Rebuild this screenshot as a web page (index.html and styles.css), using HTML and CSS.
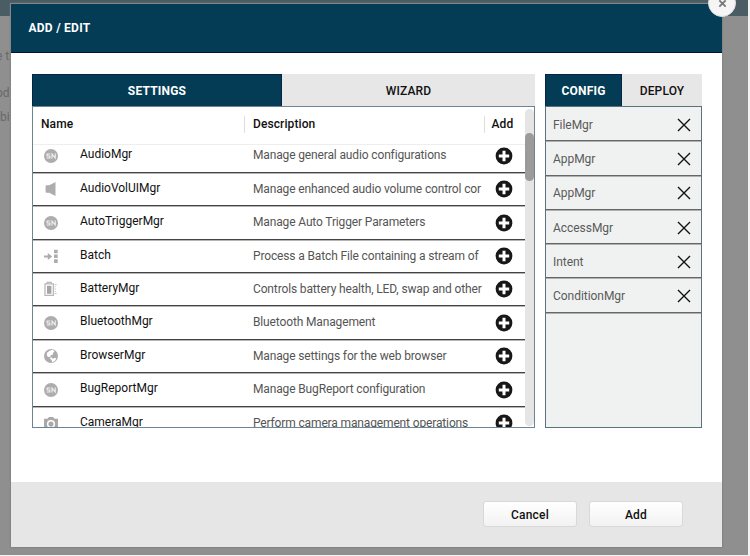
FILE: index.html
```html
<!DOCTYPE html>
<html lang="en">
<head>
<meta charset="utf-8">
<title>Add / Edit</title>
<link rel="stylesheet" href="styles.css">
</head>
<body>
<svg class="defs" width="0" height="0">
  <defs>
    <symbol id="sn" viewBox="0 0 16 16"><circle cx="8" cy="8" r="7" fill="#adadad"/><path d="M7.2 6H4.1v2h2.700v2H3.600M9 10.400V6l3.200 4V5.600" fill="none" stroke="#f2f2f2" stroke-width="1.100"/></symbol>
    <symbol id="speaker" viewBox="0 0 16 16"><path d="M2.600 5.200Q2.600 4.200 3.600 4.200H6.200L12.500 1v14L6.200 11.800H3.600Q2.600 11.800 2.600 10.800z" fill="#adadad"/></symbol>
    <symbol id="batch" viewBox="0 0 16 16"><path d="M11 1.700h3.700v3.600H11zM11 6.500h3.700v3.600H11zM11 11.300h3.700v3.600H11zM1 7.400h3.800V4.900L9.200 8.500l-4.400 3.600V9.600H1z" fill="#adadad"/></symbol>
    <symbol id="battery" viewBox="0 0 16 16"><path d="M2 2.800h8.400v11.600H2zM4.200 2.500V1.400h4v1.100" fill="none" stroke="#b9b9b9" stroke-width="1.300"/><path d="M4 4.800h4.400v8H4z" fill="#a5a5a5"/><path d="M11.800 3.500h1.800M11.800 8h1.200M11.800 12.500h1.800M11.800 5.700h1M11.800 10.500h1" stroke="#c5c5c5"/></symbol>
    <symbol id="globe" viewBox="0 0 16 16"><circle cx="8" cy="8" r="7" fill="#adadad"/><path d="M7 2.400l2.800-.6 1.700 1.500-1.300 1.500-.3 2-2 .2-.5 1.700-2.300.3-1.300-1.600L4 4.800zM6.600 10l1.700-.7 1.600 1.400 2-1 1.500.8-1.700 2.600-2.600 1.100-.4-2z" fill="#fff"/></symbol>
    <symbol id="camera" viewBox="0 0 16 16"><path d="M1 3.700h3.500L6 2h4l1.500 1.700H15V15H1z" fill="#a9a9a9"/><circle cx="8" cy="9" r="3.300" fill="none" stroke="#fff" stroke-width="1.500"/></symbol>
    <symbol id="plus" viewBox="0 0 18 18"><circle cx="9" cy="9" r="8.400" fill="#171717"/><path d="M9 3.800v10.400M3.800 9h10.400" stroke="#fff" stroke-width="3"/></symbol>
    <symbol id="cross" viewBox="0 0 14 14"><path d="M1 1l12 12M13 1L1 13" stroke="#111" stroke-width="1.350"/></symbol>
  </defs>
</svg>
<div class="page">
  <div class="topbar"></div>
  <p class="ghost g1">e th</p><p class="ghost g2">odu</p><p class="ghost g3">bi</p>
</div>
<div class="modal">
  <header class="title">ADD / EDIT</header>
  <main class="content">
    <section class="library">
      <nav class="tabs"><div class="tab active">SETTINGS</div><div class="tab">WIZARD</div></nav>
      <div class="frame">
        <div class="table">
          <div class="heads"><b class="h-name">Name</b><b class="h-desc">Description</b><b class="h-add">Add</b></div>
          <div class="rows">
            <div class="row"><svg class="icon"><use href="#sn"/></svg><span class="name">AudioMgr</span><span class="desc">Manage general audio configurations</span><svg class="plus"><use href="#plus"/></svg></div>
            <div class="row"><svg class="icon"><use href="#speaker"/></svg><span class="name">AudioVolUIMgr</span><span class="desc">Manage enhanced audio volume control cor</span><svg class="plus"><use href="#plus"/></svg></div>
            <div class="row"><svg class="icon"><use href="#sn"/></svg><span class="name">AutoTriggerMgr</span><span class="desc">Manage Auto Trigger Parameters</span><svg class="plus"><use href="#plus"/></svg></div>
            <div class="row"><svg class="icon"><use href="#batch"/></svg><span class="name">Batch</span><span class="desc">Process a Batch File containing a stream of</span><svg class="plus"><use href="#plus"/></svg></div>
            <div class="row"><svg class="icon"><use href="#battery"/></svg><span class="name">BatteryMgr</span><span class="desc">Controls battery health, LED, swap and other</span><svg class="plus"><use href="#plus"/></svg></div>
            <div class="row"><svg class="icon"><use href="#sn"/></svg><span class="name">BluetoothMgr</span><span class="desc">Bluetooth Management</span><svg class="plus"><use href="#plus"/></svg></div>
            <div class="row"><svg class="icon"><use href="#globe"/></svg><span class="name">BrowserMgr</span><span class="desc">Manage settings for the web browser</span><svg class="plus"><use href="#plus"/></svg></div>
            <div class="row"><svg class="icon"><use href="#sn"/></svg><span class="name">BugReportMgr</span><span class="desc">Manage BugReport configuration</span><svg class="plus"><use href="#plus"/></svg></div>
            <div class="row"><svg class="icon"><use href="#camera"/></svg><span class="name">CameraMgr</span><span class="desc">Perform camera management operations</span><svg class="plus"><use href="#plus"/></svg></div>
          </div>
        </div>
        <div class="track"><div class="thumb"></div></div>
      </div>
    </section>
    <section class="selected">
      <nav class="tabs"><div class="tab active">CONFIG</div><div class="tab">DEPLOY</div></nav>
      <div class="picked">
        <div class="item">FileMgr<svg><use href="#cross"/></svg></div>
        <div class="item">AppMgr<svg><use href="#cross"/></svg></div>
        <div class="item">AppMgr<svg><use href="#cross"/></svg></div>
        <div class="item">AccessMgr<svg><use href="#cross"/></svg></div>
        <div class="item">Intent<svg><use href="#cross"/></svg></div>
        <div class="item">ConditionMgr<svg><use href="#cross"/></svg></div>
      </div>
    </section>
  </main>
  <footer class="actions"><button>Cancel</button><button>Add</button></footer>
  <div class="close"><svg viewBox="0 0 10 10"><path d="M1.500 1.500l7 7M8.500 1.500l-7 7" stroke="#777" stroke-width="2"/></svg></div>
</div>
</body>
</html>
```
FILE: styles.css
```css
* { box-sizing: border-box; }
body { margin: 0; width: 750px; height: 556px; overflow: hidden; position: relative; background: #f3f3f3; font-family: Roboto, sans-serif; font-size: 12px; color: #111; }
.defs { position: absolute; }
.page { width: 748px; height: 555px; background: #8f8f8f; overflow: hidden; }
.topbar { height: 16px; background: #4b5d64; }
.ghost { position: absolute; left: 0; margin: 0; font-size: 12px; line-height: 16px; color: #686868; white-space: nowrap; }
.g1 { top: 48px; left: -4px; }
.g2 { top: 85px; left: -4px; }
.g3 { top: 109px; }
.modal { position: absolute; left: 11px; top: 4px; width: 711px; height: 543px; display: flex; flex-direction: column; background: #fff; box-shadow: 0 0 1px 1px #858585; }
.title { height: 49px; padding-left: 17.500px; line-height: 49px; background: #043c56; border-bottom: 1px solid #050f40; color: #fff; font-size: 12px; font-weight: 700; letter-spacing: .25px; }
.content { flex: 1; display: flex; gap: 10px; padding: 21px 20px 53px 21px; }
.library { width: 503px; display: flex; flex-direction: column; }
.selected { width: 157px; display: flex; flex-direction: column; }
.tabs { height: 32px; display: flex; background: #e7e7e7; }
.tab { flex: 1; text-align: center; line-height: 34px; font-weight: 500; letter-spacing: .15px; }
.tab.active { background: #043c56; color: #fff; font-weight: 700; border: 1px solid #062348; border-bottom: 0; line-height: 32px; letter-spacing: .2px; }
.library .tab.active { flex: 0 0 250px; }
.selected .tab.active { flex: 0 0 77px; letter-spacing: .2px; }
.frame { height: 322px; border: 1px solid #6b8596; display: flex; justify-content: space-between; }
.table { width: 492px; display: flex; flex-direction: column; }
.heads { height: 38px; flex: none; display: flex; align-items: center; border-bottom: 1px solid #eee; letter-spacing: .1px; padding-bottom: 3px; }
.heads b { font-weight: 500; line-height: 17px; height: 17px; }
.h-name { width: 212px; padding-left: 8px; border-right: 1px solid #ddd; }
.h-desc { width: 240px; padding-left: 8px; border-right: 1px solid #ddd; }
.h-add { padding-left: 6.500px; }
.rows { flex: 1; overflow: hidden; }
.row { height: 33.450px; display: flex; border-bottom: 1px solid #444; box-shadow: 0 1px #b5b5b5; }
.row:first-child { margin-top: -5.800px; }
.icon { width: 16px; height: 16px; margin: 8.500px 0 0 9.500px; flex: none; }
.name { width: 194.500px; padding-left: 21.500px; line-height: 31px; flex: none; letter-spacing: 0; }
.desc { width: 229px; flex: none; line-height: 33.500px; color: #555; white-space: nowrap; overflow: hidden; letter-spacing: -.14px; }
.plus { width: 18px; height: 18px; margin: 7.500px 0 0 13px; flex: none; }
.track { width: 9px; height: 317px; margin: 2px 0; padding-top: 24px; border-radius: 5px; background: #e5e5e5; }
.thumb { width: 9px; height: 48px; border-radius: 5px; background: #9b9b9b; }
.picked { height: 322px; background: #f0f2f1; border: 1px solid #5b717e; }
.item { height: 34.300px; display: flex; align-items: center; justify-content: space-between; padding: 2px 10.500px 0 7px; border-bottom: 1px solid #666; box-shadow: 0 1px #b0b0b0; color: #5a5a5a; letter-spacing: -.04px; }
.item svg { width: 14px; height: 14px; }
.actions { height: 65px; background: #e6e6e6; display: flex; justify-content: flex-end; gap: 12px; padding: 19px 39px 0 0; }
button { width: 94px; height: 26px; padding: 0; border: 1px solid #d9d9d9; border-radius: 3px; background: linear-gradient(#fff, #f2f2f2); font: 500 12px/26px Roboto, sans-serif; letter-spacing: .2px; color: #111; }
.close { position: absolute; left: 697px; top: -15px; width: 28px; height: 28px; border-radius: 50%; background: #f5f5f5; border: 1px solid #ddd; display: flex; justify-content: center; align-items: center; }
.close svg { width: 9px; height: 9px; }
```
